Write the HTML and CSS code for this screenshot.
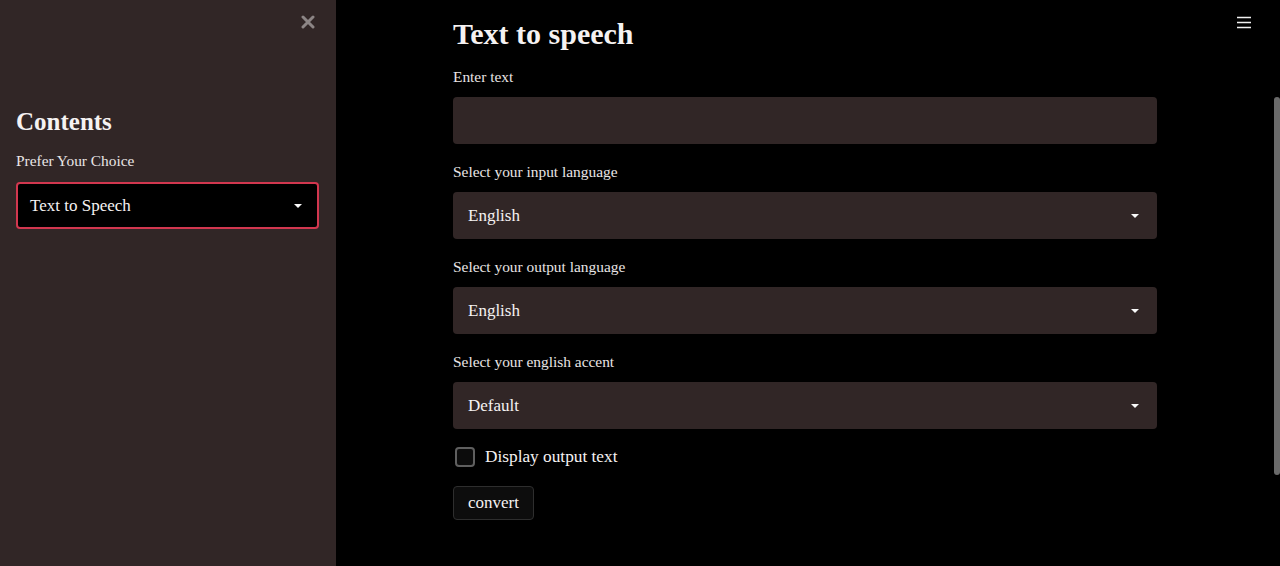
FILE: index.html
```html
<!DOCTYPE html>
<html>
<head>
<meta charset="utf-8">
<link rel="stylesheet" href="styles.css">
</head>
<body>
<div class="app">
  <aside class="sidebar">
    <div class="close-row">
      <svg class="close" width="14" height="14" viewBox="0 0 14 14"><path d="M2 2 L12 12 M12 2 L2 12" stroke="#8c8585" stroke-width="3" stroke-linecap="round"/></svg>
    </div>
    <h2 class="side-title">Contents</h2>
    <div class="label">Prefer Your Choice</div>
    <div class="select side-select">
      <span>Text to Speech</span>
      <span class="arrow"></span>
    </div>
  </aside>
  <main class="main">
    <div class="content">
      <h1 class="title">Text to speech</h1>
      <div class="label">Enter text</div>
      <div class="input"></div>
      <div class="label">Select your input language</div>
      <div class="select"><span>English</span><span class="arrow"></span></div>
      <div class="label">Select your output language</div>
      <div class="select"><span>English</span><span class="arrow"></span></div>
      <div class="label">Select your english accent</div>
      <div class="select"><span>Default</span><span class="arrow"></span></div>
      <div class="check-row"><span class="checkbox"></span><span>Display output text</span></div>
      <div><button class="btn">convert</button></div>
    </div>
    <div class="menu">
      <svg width="14" height="13" viewBox="0 0 14 13"><path d="M0 1.5 H14 M0 6.5 H14 M0 11.5 H14" stroke="#f0f0f0" stroke-width="1.6"/></svg>
    </div>
    <div class="scrollbar"></div>
  </main>
</div>
</body>
</html>
```
FILE: styles.css
```css
html, body {
  margin: 0;
  padding: 0;
  background: #000;
}
body {
  font-family: "Liberation Serif", "DejaVu Serif", serif;
  color: #f5f2f2;
  width: 1280px;
  height: 566px;
  overflow: hidden;
}
.app {
  display: flex;
  height: 566px;
}
.sidebar {
  width: 336px;
  flex: none;
  background: #312626;
  box-sizing: border-box;
  padding: 0 17px 0 16px;
}
.close-row {
  display: flex;
  justify-content: flex-end;
  padding-top: 15px;
  padding-right: 4px;
  height: 14px;
}
.side-title {
  margin: 77px 0 13px;
  font-size: 25px;
  line-height: 32px;
  font-weight: bold;
}
.label {
  font-size: 15.4px;
  line-height: 20px;
  height: 20px;
  margin-bottom: 10px;
  color: #e9e5e5;
}
.sidebar .label { margin-bottom: 11px; }
.select, .input {
  height: 47px;
  background: #312626;
  border-radius: 4px;
  box-sizing: border-box;
  margin-bottom: 18px;
}
.select {
  display: flex;
  align-items: center;
  justify-content: space-between;
  padding: 0 18px 0 15px;
  font-size: 17px;
}
.side-select {
  background: #000;
  border: 2px solid #d2374f;
  padding-left: 12px;
  padding-right: 15px;
}
.arrow {
  width: 0;
  height: 0;
  border-left: 4px solid transparent;
  border-right: 4px solid transparent;
  border-top: 4px solid #fafafa;
}
.main {
  flex: 1;
  position: relative;
}
.content {
  width: 704px;
  margin-left: 117px;
  padding-top: 14px;
}
.title {
  margin: 0 0 13px;
  font-size: 30px;
  line-height: 40px;
  font-weight: bold;
}
.check-row {
  display: flex;
  align-items: center;
  height: 20px;
  gap: 10px;
  font-size: 17.3px;
  margin-bottom: 19px;
}
.checkbox {
  width: 20px;
  height: 20px;
  box-sizing: border-box;
  border: 2px solid #5f5f5f;
  border-radius: 4px;
  margin-left: 2px;
  background: #0c0c0c;
}
.btn {
  height: 34px;
  width: 81px;
  background: #0d0d0d;
  border: 1px solid #2e2e2e;
  border-radius: 4px;
  color: #f5f2f2;
  font-family: "Liberation Serif", "DejaVu Serif", serif;
  font-size: 17px;
  padding: 0;
}
.menu {
  position: absolute;
  top: 16px;
  left: 901px;
  width: 14px;
  height: 13px;
}
.menu svg { display: block; }
.scrollbar {
  position: absolute;
  left: 938px;
  top: 97px;
  width: 6px;
  height: 378px;
  border-radius: 3px;
  background: #6a6a6a;
}
```
